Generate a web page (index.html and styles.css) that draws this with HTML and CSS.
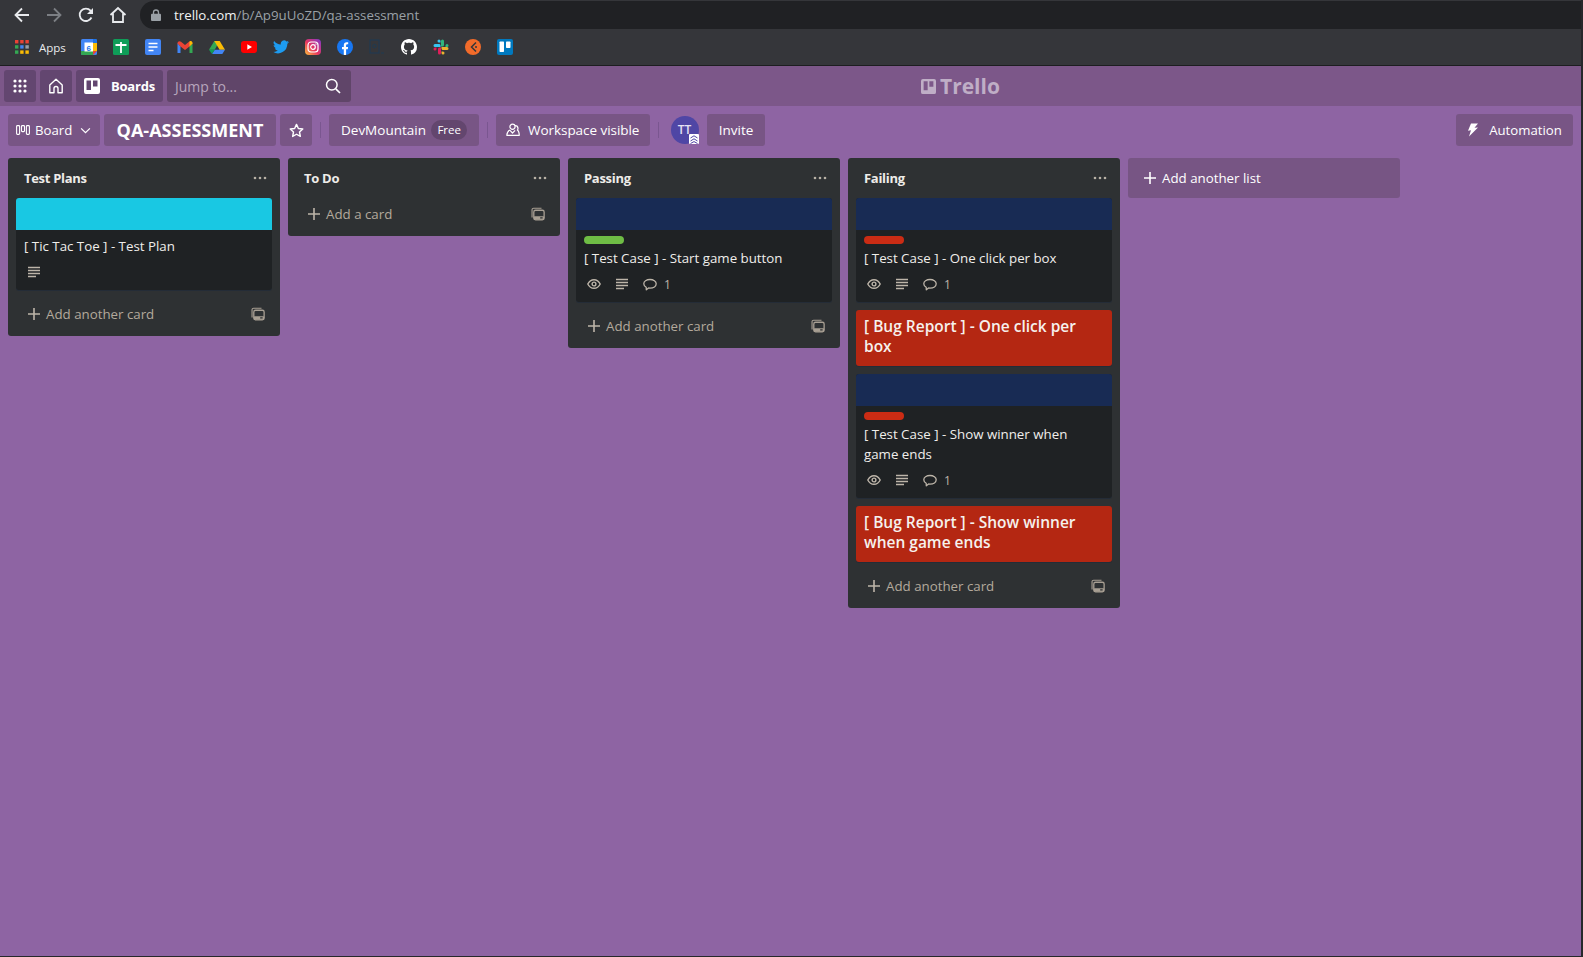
FILE: index.html
```html
<!DOCTYPE html>
<html lang="en">
<head>
<meta charset="utf-8">
<title>QA-ASSESSMENT | Trello</title>
<link rel="stylesheet" href="styles.css">
</head>
<body>
<svg class="sprites" width="0" height="0" aria-hidden="true">
  <symbol id="i-card" viewBox="0 0 16 16"><path d="M1.200 12V3.200A1.800 1.800 0 0 1 3 1.400h9" fill="none" stroke="currentColor" stroke-width="1.300"/><rect x="3.200" y="3.700" width="11.800" height="11" rx="2" fill="none" stroke="currentColor" stroke-width="1.500"/><rect x="3.200" y="10.700" width="11.800" height="4" rx="1" fill="currentColor"/><rect x="10.500" y="11.700" width="2.800" height="1.500" fill="#2e3133"/></symbol>
  <symbol id="i-plus" viewBox="0 0 14 14"><path d="M7 1v12M1 7h12" stroke="currentColor" stroke-width="1.600" fill="none"/></symbol>
  <symbol id="i-desc" viewBox="0 0 14 14"><path d="M1 2.500h12M1 5.500h12M1 8.500h12M1 11.500h8" stroke="currentColor" stroke-width="1.500" fill="none"/></symbol>
  <symbol id="i-eye" viewBox="0 0 14 14"><path d="M.8 7C2.200 4.200 4.400 2.700 7 2.700s4.800 1.500 6.200 4.300c-1.400 2.800-3.600 4.300-6.200 4.300S2.200 9.800.8 7z" fill="none" stroke="currentColor" stroke-width="1.400"/><circle cx="7" cy="7" r="1.900" fill="none" stroke="currentColor" stroke-width="1.400"/></symbol>
  <symbol id="i-comment" viewBox="0 0 14 14"><path d="M3.200 10.300C1.700 9.500.8 8.300.8 6.800c0-2.500 2.700-4.300 6.200-4.300s6.200 1.800 6.200 4.300-2.700 4.300-6.200 4.300c-.5 0-1 0-1.400-.1L3.300 12.800z" fill="none" stroke="currentColor" stroke-width="1.300" stroke-linejoin="round"/></symbol>
  <symbol id="i-dots" viewBox="0 0 14 4"><circle cx="2" cy="2" r="1.300" fill="currentColor"/><circle cx="7" cy="2" r="1.300" fill="currentColor"/><circle cx="12" cy="2" r="1.300" fill="currentColor"/></symbol>
</svg>

<div class="chrome">
  <div class="toolbar">
    <nav class="nav-icons">
      <span class="nav-btn"><svg width="16" height="16" viewBox="0 0 16 16"><path d="M15 8H2M8 1.500 1.500 8 8 14.500" fill="none" stroke="#e8eaed" stroke-width="1.800"/></svg></span>
      <span class="nav-btn"><svg width="16" height="16" viewBox="0 0 16 16"><path d="M1 8h13M8 1.500 14.500 8 8 14.500" fill="none" stroke="#7c7f84" stroke-width="1.800"/></svg></span>
      <span class="nav-btn"><svg width="16" height="16" viewBox="0 0 16 16"><path d="M13.500 10.500A6.200 6.200 0 1 1 12.600 3.700L14.500 5.600" fill="none" stroke="#e8eaed" stroke-width="1.800"/><path d="M15 1v6H9z" fill="#e8eaed"/></svg></span>
      <span class="nav-btn"><svg width="18" height="18" viewBox="0 0 18 18"><path d="M1.500 9 9 2l7.500 7M4 7.500V16h10V7.500" fill="none" stroke="#e8eaed" stroke-width="1.800"/></svg></span>
    </nav>
    <div class="omnibox">
      <svg class="lock" width="10" height="12" viewBox="0 0 10 12"><path d="M2.500 5V3.500a2.500 2.500 0 0 1 5 0V5" fill="none" stroke="#9aa0a6" stroke-width="1.300"/><rect y="4.800" width="10" height="7.200" rx="1" fill="#9aa0a6"/></svg>
      <span class="url"><span class="url-host">trello.com</span>/b/Ap9uUoZD/qa-assessment</span>
    </div>
  </div>
  <div class="bookmarks">
    <span class="bm-apps">
      <svg width="14" height="14" viewBox="0 0 14 14"><rect width="3.400" height="3.400" fill="#ea4335"/><rect x="5.200" width="3.400" height="3.400" fill="#ea4335"/><rect x="10.400" width="3.400" height="3.400" fill="#ea4335"/><rect y="5.200" width="3.400" height="3.400" fill="#34a853"/><rect x="5.200" y="5.200" width="3.400" height="3.400" fill="#4285f4"/><rect x="10.400" y="5.200" width="3.400" height="3.400" fill="#9aa0a6"/><rect y="10.400" width="3.400" height="3.400" fill="#34a853"/><rect x="5.200" y="10.400" width="3.400" height="3.400" fill="#fbbc04"/><rect x="10.400" y="10.400" width="3.400" height="3.400" fill="#fbbc04"/></svg>
      <span class="bm-label">Apps</span>
    </span>
    <span class="bm"><svg width="16" height="16" viewBox="0 0 16 16"><rect width="16" height="16" rx="1.500" fill="#4285f4"/><path d="M12 0h2.500A1.500 1.500 0 0 1 16 1.500V4h-4z" fill="#1a73e8"/><rect x="12" y="4" width="4" height="8" fill="#fbbc04"/><path d="M0 12h12v4H1.500A1.500 1.500 0 0 1 0 14.500z" fill="#34a853"/><path d="M12 12h4l-4 4z" fill="#ea4335"/><rect x="3.500" y="3.500" width="8.500" height="9" fill="#fff"/><text x="7.800" y="11.500" class="cal-day">6</text></svg></span>
    <span class="bm"><svg width="16" height="16" viewBox="0 0 16 16"><rect width="16" height="16" rx="1.500" fill="#0f9d58"/><path d="M8 3v11M2.500 6h11" stroke="#fff" stroke-width="1.800"/></svg></span>
    <span class="bm"><svg width="16" height="16" viewBox="0 0 16 16"><rect width="16" height="16" rx="2" fill="#4285f4"/><path d="M3.500 4.500h9M3.500 8h9M3.500 11.500h5" stroke="#fff" stroke-width="1.500"/></svg></span>
    <span class="bm"><svg width="16" height="16" viewBox="0 0 16 16"><path d="M.5 4v10h3V7.500z" fill="#4285f4"/><path d="M15.500 4v10h-3V7.500z" fill="#34a853"/><path d="M.5 4.500C.5 2.500 2.500 1.500 4 2.800L8 6l4-3.200c1.500-1.300 3.500-.3 3.500 1.700L12.500 7.500 8 11 3.500 7.500z" fill="#ea4335"/><path d="M12.500 2.500c1.500-1 3-.1 3 2l-3 3z" fill="#fbbc04"/></svg></span>
    <span class="bm"><svg width="16" height="15" viewBox="0 0 16 15"><path d="M5.300 1h5.400l-5 8.700H0z" fill="#34a853"/><path d="M10.700 1 16 9.700h-5.400L5.300 1z" fill="#fbbc04"/><path d="M3 14 5.700 9.700H16L13.300 14z" fill="#4285f4"/><path d="M0 9.700h5.700L3 14z" fill="#0f9d58"/></svg></span>
    <span class="bm"><svg width="16" height="12" viewBox="0 0 16 12"><rect width="16" height="12" rx="3" fill="#f00"/><path d="M6.300 3.300v5.400L11 6z" fill="#fff"/></svg></span>
    <span class="bm"><svg width="16" height="14" viewBox="0 0 24 20"><path d="M24 2.400a9.800 9.800 0 0 1-2.800.8A5 5 0 0 0 23.300.5a9.900 9.900 0 0 1-3.100 1.200 4.900 4.900 0 0 0-8.400 4.500A14 14 0 0 1 1.700.9a4.900 4.900 0 0 0 1.500 6.600 4.900 4.900 0 0 1-2.200-.6c0 2.400 1.700 4.400 3.900 4.900a4.900 4.900 0 0 1-2.200.1 4.900 4.900 0 0 0 4.600 3.400A9.900 9.900 0 0 1 0 17.300 14 14 0 0 0 21.500 5c1-.7 1.900-1.600 2.500-2.600z" fill="#1d9bf0"/></svg></span>
    <span class="bm"><svg width="16" height="16" viewBox="0 0 16 16"><defs><linearGradient id="ig" x1="0" y1="1" x2="1" y2="0"><stop offset="0" stop-color="#fdc13b"/><stop offset=".45" stop-color="#e9355f"/><stop offset="1" stop-color="#7d3bd0"/></linearGradient></defs><rect width="16" height="16" rx="4" fill="url(#ig)"/><rect x="3" y="3" width="10" height="10" rx="3" fill="none" stroke="#fff" stroke-width="1.200"/><circle cx="8" cy="8" r="2.300" fill="none" stroke="#fff" stroke-width="1.200"/><circle cx="11" cy="5" r=".7" fill="#fff"/></svg></span>
    <span class="bm"><svg width="16" height="16" viewBox="0 0 16 16"><circle cx="8" cy="8" r="8" fill="#1877f2"/><path d="M6.800 16V10.300H5V8h1.800V6.300c0-1.900 1.100-3 2.800-3 .8 0 1.600.1 1.600.1v1.900h-.9c-.9 0-1.200.6-1.200 1.200V8h2l-.3 2.300H9.100V16z" fill="#fff"/></svg></span>
    <span class="bm"><svg width="16" height="16" viewBox="0 0 16 16"><rect x="1" y="1" width="9" height="13" fill="none" stroke="#1f3a52" stroke-width="1.100"/><circle cx="5.500" cy="7" r="1.800" fill="none" stroke="#1f3a52"/><path d="M12 14h3" stroke="#1f3a52"/></svg></span>
    <span class="bm"><svg width="16" height="16" viewBox="0 0 16 16"><path fill="#fff" d="M8 0C3.580 0 0 3.580 0 8c0 3.540 2.290 6.530 5.470 7.590.4.070.55-.17.55-.38 0-.19-.01-.82-.01-1.490-2.010.37-2.530-.49-2.690-.94-.09-.23-.48-.94-.82-1.130-.28-.15-.68-.52-.01-.53.63-.01 1.080.58 1.230.82.720 1.210 1.870.870 2.330.660.070-.520.280-.870.510-1.070-1.780-.200-3.640-.890-3.640-3.950 0-.870.310-1.590.820-2.150-.080-.200-.360-1.020.080-2.120 0 0 .670-.210 2.200.820.640-.180 1.320-.270 2-.270s1.360.090 2 .270c1.530-1.040 2.200-.820 2.200-.820.440 1.100.160 1.920.080 2.120.510.560.820 1.270.820 2.150 0 3.070-1.870 3.750-3.650 3.950.290.250.540.730.540 1.480 0 1.070-.010 1.930-.010 2.200 0 .210.150.460.550.380A8.010 8.010 0 0 0 16 8c0-4.420-3.580-8-8-8z"/></svg></span>
    <span class="bm"><svg width="16" height="16" viewBox="0 0 16 16"><path d="M6 .5a1.500 1.500 0 0 0 0 3h1.500V2A1.500 1.500 0 0 0 6 .5zM2 5a1.500 1.500 0 0 0 0 3h5.500V6.500C7.500 5.700 6.800 5 6 5z" fill="#36c5f0"/><path d="M15.500 6.500a1.500 1.500 0 0 0-3 0V8H14a1.500 1.500 0 0 0 1.500-1.500zM11 2a1.500 1.500 0 0 0-3 0v5.500h1.500c.8 0 1.500-.7 1.500-1.500z" fill="#2eb67d"/><path d="M10 15.500a1.500 1.500 0 0 0 0-3H8.500V14a1.500 1.500 0 0 0 1.500 1.500zM14 11a1.500 1.500 0 0 0 0-3H8.500v1.500c0 .8.7 1.500 1.500 1.500z" fill="#ecb22e"/><path d="M.5 10a1.500 1.500 0 0 0 3 0V8.500H2A1.500 1.500 0 0 0 .5 10zM5 14a1.500 1.500 0 0 0 3 0V8.500H6.500C5.700 8.500 5 9.200 5 10z" fill="#e01e5a"/></svg></span>
    <span class="bm"><svg width="16" height="16" viewBox="0 0 16 16"><circle cx="8" cy="8" r="8" fill="#f26b2a"/><path d="M11 3.500 6.500 8l4.500 4.500" fill="none" stroke="#35363a" stroke-width="1.500"/><circle cx="11" cy="8" r="1" fill="#35363a"/></svg></span>
    <span class="bm"><svg width="16" height="16" viewBox="0 0 16 16"><rect width="16" height="16" rx="2" fill="#0079bf"/><rect x="2.500" y="2.500" width="4.500" height="10.500" rx=".7" fill="#fff"/><rect x="9" y="2.500" width="4.500" height="6.500" rx=".7" fill="#fff"/></svg></span>
  </div>
</div>

<header class="topbar">
  <button class="top-btn top-square"><svg width="16" height="16" viewBox="0 0 16 16"><g fill="#fff"><circle cx="3" cy="3" r="1.600"/><circle cx="8" cy="3" r="1.600"/><circle cx="13" cy="3" r="1.600"/><circle cx="3" cy="8" r="1.600"/><circle cx="8" cy="8" r="1.600"/><circle cx="13" cy="8" r="1.600"/><circle cx="3" cy="13" r="1.600"/><circle cx="8" cy="13" r="1.600"/><circle cx="13" cy="13" r="1.600"/></g></svg></button>
  <button class="top-btn top-square"><svg width="16" height="16" viewBox="0 0 16 16"><path d="M1.800 7 8 1.300 14.200 7v7.700H10V10.500a2 2 0 0 0-4 0v4.200H1.800z" fill="none" stroke="#fff" stroke-width="1.400" stroke-linejoin="round"/></svg></button>
  <button class="top-btn top-boards"><svg width="16" height="16" viewBox="0 0 16 16"><path fill="#fff" fill-rule="evenodd" d="M2 0h12a2 2 0 0 1 2 2v12a2 2 0 0 1-2 2H2a2 2 0 0 1-2-2V2a2 2 0 0 1 2-2zm.500 2.500v9.500h4.500V2.500zm6.500 0v6h4.500v-6z"/></svg><span>Boards</span></button>
  <div class="search"><span>Jump to...</span><svg width="16" height="16" viewBox="0 0 16 16"><circle cx="6.800" cy="6.800" r="5.300" fill="none" stroke="#fff" stroke-width="1.500"/><path d="m10.800 10.800 4.200 4.200" stroke="#fff" stroke-width="1.700"/></svg></div>
  <div class="logo"><svg width="15" height="15" viewBox="0 0 16 16"><path fill="currentColor" fill-rule="evenodd" d="M2 0h12a2 2 0 0 1 2 2v12a2 2 0 0 1-2 2H2a2 2 0 0 1-2-2V2a2 2 0 0 1 2-2zm.800 2.300v9.700h4.300V2.300zm6.100 0v6h4.300v-6z"/></svg><span>Trello</span></div>
</header>

<section class="boardbar">
  <button class="bar-btn bar-view"><svg width="14" height="10" viewBox="0 0 14 10"><g fill="none" stroke="#fff" stroke-width="1.100"><rect x=".6" y=".6" width="3" height="8.800" rx=".8"/><rect x="5.500" y=".6" width="3" height="6" rx=".8"/><rect x="10.400" y=".6" width="3" height="8.800" rx=".8"/></g></svg><span>Board</span><svg width="11" height="7" viewBox="0 0 12 8"><path d="m1 1.500 5 5 5-5" fill="none" stroke="#fff" stroke-width="1.400"/></svg></button>
  <h1 class="bar-btn board-title">QA-ASSESSMENT</h1>
  <button class="bar-btn bar-star"><svg width="15" height="15" viewBox="0 0 16 16"><path d="m8 1.500 2 4.300 4.700.6-3.500 3.200.9 4.700L8 12l-4.100 2.300.9-4.700L1.300 6.400 6 5.800z" fill="none" stroke="#fff" stroke-width="1.500" stroke-linejoin="round"/></svg></button>
  <i class="divider"></i>
  <button class="bar-btn bar-team"><span>DevMountain</span><span class="free">Free</span></button>
  <i class="divider"></i>
  <button class="bar-btn bar-visible"><svg width="14" height="14" viewBox="0 0 14 14"><g fill="none" stroke="#fff" stroke-width="1.200" stroke-linejoin="round"><circle cx="6.500" cy="3.800" r="2.600"/><path d="M9 2.600c1.800 0 3 1.300 3 2.800 0 .7-.2 1.200-.6 1.700 1 .5 1.700 1.700 1.900 5.200H.8c.2-2.700 1.300-4.500 3.200-5.300M4 7.300 6.500 10l2.600-2.700"/></g></svg><span>Workspace visible</span></button>
  <i class="divider"></i>
  <div class="avatar"><span>TT</span><svg class="avatar-badge" width="10" height="10" viewBox="0 0 10 10"><rect width="10" height="10" rx="1" fill="#fff"/><path d="M1.500 4 5 1.800 8.500 4M1.500 7 5 4.800 8.500 7M1.500 9.500 5 7.600l3.500 1.900" fill="none" stroke="#4f46a5" stroke-width="1"/></svg></div>
  <button class="bar-btn bar-invite">Invite</button>
  <button class="bar-btn bar-auto"><svg width="12" height="14" viewBox="0 0 12 14"><path d="M4 .5h7L7.500 4.800 11 4.500 2 13.500l2-6.300-3 .5z" fill="#fff"/></svg><span>Automation</span></button>
</section>

<main class="lists">
  <section class="list">
    <header class="list-head"><h2>Test Plans</h2><svg class="dots" width="14" height="4"><use href="#i-dots"/></svg></header>
    <article class="card">
      <div class="cover cover-cyan"></div>
      <div class="card-body">
        <p class="card-title">[ Tic Tac Toe ] - Test Plan</p>
        <div class="badges"><svg class="badge-icon" width="14" height="14"><use href="#i-desc"/></svg></div>
      </div>
    </article>
    <footer class="list-foot"><svg class="plus" width="14" height="14"><use href="#i-plus"/></svg><span>Add another card</span><svg class="tpl" width="14" height="14"><use href="#i-card"/></svg></footer>
  </section>

  <section class="list">
    <header class="list-head"><h2>To Do</h2><svg class="dots" width="14" height="4"><use href="#i-dots"/></svg></header>
    <footer class="list-foot foot-first"><svg class="plus" width="14" height="14"><use href="#i-plus"/></svg><span>Add a card</span><svg class="tpl" width="14" height="14"><use href="#i-card"/></svg></footer>
  </section>

  <section class="list">
    <header class="list-head"><h2>Passing</h2><svg class="dots" width="14" height="4"><use href="#i-dots"/></svg></header>
    <article class="card">
      <div class="cover cover-navy"></div>
      <div class="card-body">
        <span class="label label-green"></span>
        <p class="card-title">[ Test Case ] - Start game button</p>
        <div class="badges"><svg class="badge-icon" width="14" height="14"><use href="#i-eye"/></svg><svg class="badge-icon" width="14" height="14"><use href="#i-desc"/></svg><svg class="badge-icon" width="14" height="14"><use href="#i-comment"/></svg><span class="badge-num">1</span></div>
      </div>
    </article>
    <footer class="list-foot"><svg class="plus" width="14" height="14"><use href="#i-plus"/></svg><span>Add another card</span><svg class="tpl" width="14" height="14"><use href="#i-card"/></svg></footer>
  </section>

  <section class="list">
    <header class="list-head"><h2>Failing</h2><svg class="dots" width="14" height="4"><use href="#i-dots"/></svg></header>
    <article class="card">
      <div class="cover cover-navy"></div>
      <div class="card-body">
        <span class="label label-red"></span>
        <p class="card-title">[ Test Case ] - One click per box</p>
        <div class="badges"><svg class="badge-icon" width="14" height="14"><use href="#i-eye"/></svg><svg class="badge-icon" width="14" height="14"><use href="#i-desc"/></svg><svg class="badge-icon" width="14" height="14"><use href="#i-comment"/></svg><span class="badge-num">1</span></div>
      </div>
    </article>
    <article class="card card-bug">[ Bug Report ] - One click per box</article>
    <article class="card">
      <div class="cover cover-navy"></div>
      <div class="card-body">
        <span class="label label-red"></span>
        <p class="card-title">[ Test Case ] - Show winner when game ends</p>
        <div class="badges"><svg class="badge-icon" width="14" height="14"><use href="#i-eye"/></svg><svg class="badge-icon" width="14" height="14"><use href="#i-desc"/></svg><svg class="badge-icon" width="14" height="14"><use href="#i-comment"/></svg><span class="badge-num">1</span></div>
      </div>
    </article>
    <article class="card card-bug">[ Bug Report ] - Show winner when game ends</article>
    <footer class="list-foot"><svg class="plus" width="14" height="14"><use href="#i-plus"/></svg><span>Add another card</span><svg class="tpl" width="14" height="14"><use href="#i-card"/></svg></footer>
  </section>

  <button class="add-list"><svg width="14" height="14"><use href="#i-plus"/></svg><span>Add another list</span></button>
</main>
</body>
</html>
```

FILE: styles.css
```css
* { box-sizing: border-box; }

html, body { height: 100%; }

body {
  margin: 0;
  display: flex;
  flex-direction: column;
  overflow: hidden;
  background: #8e64a3;
  border-right: 2px solid #26282b;
  border-bottom: 1px solid #26282b;
  font-family: "Open Sans", "Noto Sans", sans-serif;
  font-size: 13px;
  color: #fff;
}

.sprites { position: absolute; }

button {
  font: inherit;
  color: inherit;
  border: 0;
  margin: 0;
  padding: 0;
  cursor: pointer;
}

h1, h2, p { margin: 0; }

/* Browser frame */
.chrome {
  margin-right: -2px;
  background: #35363a;
  border-bottom: 1px solid #1d1e20;
}

.toolbar {
  display: flex;
  height: 30px;
  padding: 1px 0 1px 6px;
}

.nav-icons { display: flex; width: 134px; }

.nav-btn {
  display: flex;
  align-items: center;
  justify-content: center;
  width: 32px;
  height: 28px;
}

.omnibox {
  flex: 1;
  display: flex;
  align-items: center;
  padding-left: 11px;
  background: #202124;
  border-radius: 14px 0 0 14px;
}

.lock { margin-right: 13px; }

.url { color: #9aa0a6; font-size: 13.300px; white-space: nowrap; }

.url-host { color: #f1f3f4; }

.bookmarks {
  display: flex;
  align-items: center;
  height: 35px;
  padding: 0 0 1px 15px;
}

.bm-apps {
  display: flex;
  align-items: center;
  gap: 10px;
  width: 58px;
  font-size: 11.500px;
  color: #e8eaed;
}

.bm {
  display: flex;
  align-items: center;
  justify-content: center;
  width: 32px;
  height: 24px;
}

.cal-day {
  font-family: "Liberation Sans", sans-serif;
  font-size: 8px;
  font-weight: 700;
  text-anchor: middle;
  fill: #1a73e8;
}

/* Trello header */
.topbar {
  display: flex;
  align-items: center;
  gap: 4px;
  height: 40px;
  padding: 0 4px;
  margin-right: -2px;
  background: #7c5789;
}

.top-btn {
  display: flex;
  align-items: center;
  justify-content: center;
  height: 32px;
  background: #634670;
  border-radius: 3px;
}

.top-square { width: 32px; }

.top-boards {
  width: 87px;
  gap: 11px;
  font-weight: 700;
  letter-spacing: -.2px;
}

.search {
  display: flex;
  align-items: center;
  justify-content: space-between;
  width: 184px;
  height: 32px;
  padding: 0 10px 0 8px;
  background: #604569;
  border-radius: 3px;
  font-size: 14px;
  color: #b7a6bd;
}

.logo {
  display: flex;
  align-items: center;
  gap: 4px;
  margin-left: 566px;
  font-size: 21px;
  font-weight: 700;
  color: #bfaec6;
}

/* Board bar */
.boardbar {
  display: flex;
  align-items: center;
  height: 48px;
  padding: 0 8px;
  gap: 4px;
}

.bar-btn {
  display: flex;
  align-items: center;
  height: 32px;
  background: #785585;
  border-radius: 3px;
  font-size: 13.500px;
  font-weight: 400;
  white-space: nowrap;
}

.bar-view {
  width: 92px;
  padding: 0 8px;
  gap: 5px;
  font-size: 13.200px;
}

.bar-view svg:last-child { margin-left: 3px; }

.board-title {
  justify-content: center;
  width: 172px;
  font-size: 18px;
  font-weight: 700;
}

.bar-star { justify-content: center; width: 32px; }

.divider {
  width: 1px;
  height: 16px;
  margin: 0 4px;
  background: #7a5690;
}

.bar-team {
  justify-content: space-between;
  width: 150px;
  padding: 0 12px;
}

.free {
  padding: 1px 6px;
  background: #63466e;
  border-radius: 10px;
  font-size: 11.500px;
  line-height: 18px;
}

.bar-visible {
  width: 154px;
  padding: 0 10px;
  gap: 8px;
  letter-spacing: -.05px;
}

.avatar {
  position: relative;
  display: flex;
  align-items: center;
  justify-content: center;
  width: 28px;
  height: 28px;
  margin: 0 4px;
  background: #4f46a5;
  border-radius: 50%;
  font-size: 12px;
  font-weight: 600;
}

.avatar span { margin-bottom: 2px; margin-right: 1px; color: #e4e2f2; }

.avatar-badge {
  position: absolute;
  right: 0;
  bottom: 0;
}

.bar-invite { justify-content: center; width: 58px; }

.bar-auto {
  justify-content: center;
  gap: 10px;
  width: 117px;
  margin-left: auto;
  font-size: 13.200px;
}

/* Lists */
.lists {
  flex: 1;
  display: flex;
  align-items: flex-start;
  gap: 8px;
  padding: 4px 8px;
}

.list {
  flex: none;
  width: 272px;
  padding-bottom: 6px;
  background: #2e3133;
  border-radius: 3px;
}

.list-head {
  display: flex;
  align-items: center;
  justify-content: space-between;
  height: 40px;
  padding: 0 13px 0 16px;
}

.list-head h2 {
  font-size: 13px;
  font-weight: 700;
  letter-spacing: -.3px;
  color: #eeece9;
}

.dots { color: #b8b1a6; }

.card {
  margin: 0 8px 8px;
  background: #1f2224;
  border-radius: 3px;
  overflow: hidden;
  box-shadow: 0 1px 0 rgba(9, 30, 66, .25);
}

.cover { height: 32px; }

.cover-cyan { background: #19c8e3; }

.cover-navy { background: #182b54; }

.card-body { padding: 6px 8px 6px; }

.label {
  display: block;
  width: 40px;
  height: 8px;
  margin-bottom: 4px;
  border-radius: 4px;
}

.label-green { background: #6fbd45; }

.label-red { background: #cb2c14; }

.card-title {
  font-size: 13.300px;
  line-height: 20px;
  color: #f0eeeb;
}

.badges {
  display: flex;
  align-items: center;
  gap: 14px;
  height: 24px;
  margin-top: 4px;
  padding-left: 3px;
  color: #bdb5a9;
}

.badge-num { margin-left: -7px; font-size: 12px; }

.card-bug {
  padding: 6px 8px 10px;
  background: #b42712;
  font-size: 15.500px;
  font-weight: 600;
  line-height: 20px;
  color: #f6f1ed;
}

.list-foot {
  display: flex;
  align-items: center;
  height: 32px;
  padding: 0 7px 0 11px;
  margin: 0 8px;
  font-size: 13.300px;
  color: #b3a99c;
}

.plus { margin-right: 5px; color: #bdb5a9; }

.tpl { margin-left: auto; color: #a89f93; }

.add-list {
  flex: none;
  display: flex;
  align-items: center;
  gap: 5px;
  width: 272px;
  height: 40px;
  padding: 0 15px;
  background: #775584;
  border-radius: 3px;
  font-size: 13.300px;
  text-align: left;
}
```
